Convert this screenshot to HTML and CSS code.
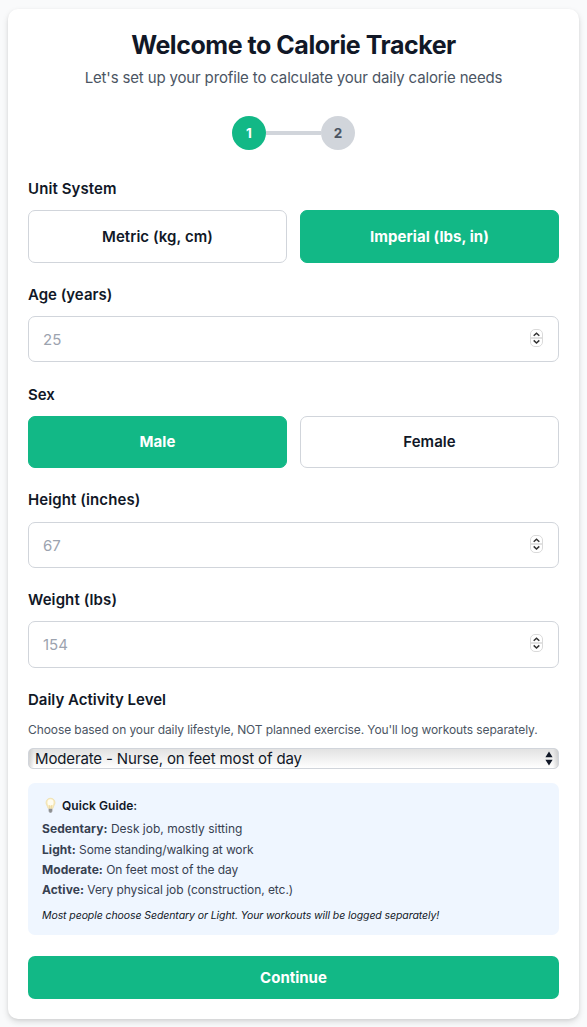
FILE: index.html
```html
<!DOCTYPE html>
<html lang="en">
<head>
<meta charset="utf-8">
<title>Calorie Tracker</title>
<link rel="stylesheet" href="styles.css">
</head>
<body>
<main class="card">
  <h1 class="title"><span>Welcome to Calorie Tracker</span></h1>
  <p class="subtitle"><span>Let's set up your profile to calculate your daily calorie needs</span></p>
  <div class="steps">
    <span class="step step-active">1</span>
    <span class="step-line"></span>
    <span class="step">2</span>
  </div>

  <section class="field field-unit">
    <div class="label">Unit System</div>
    <div class="choices">
      <button class="choice">Metric (kg, cm)</button>
      <button class="choice selected">Imperial (lbs, in)</button>
    </div>
  </section>

  <section class="field field-age">
    <div class="label">Age (years)</div>
    <div class="input"><span>25</span>
      <svg class="spinner" width="13" height="18" viewBox="0 0 13 18"><rect x=".5" y=".5" width="12" height="17" rx="4.5" fill="#fff" stroke="#dadada"/><path d="M1 9h11" stroke="#e2e2e2" stroke-width="2"/><path d="M3.7 6.8 6.5 4.2 9.3 6.8M3.7 11.4l2.8 2.6 2.8-2.6" fill="none" stroke="#333" stroke-width="1.5"/></svg>
    </div>
  </section>

  <section class="field field-sex">
    <div class="label">Sex</div>
    <div class="choices">
      <button class="choice selected">Male</button>
      <button class="choice">Female</button>
    </div>
  </section>

  <section class="field field-height">
    <div class="label">Height (inches)</div>
    <div class="input"><span>67</span>
      <svg class="spinner" width="13" height="18" viewBox="0 0 13 18"><rect x=".5" y=".5" width="12" height="17" rx="4.5" fill="#fff" stroke="#dadada"/><path d="M1 9h11" stroke="#e2e2e2" stroke-width="2"/><path d="M3.7 6.8 6.5 4.2 9.3 6.8M3.7 11.4l2.8 2.6 2.8-2.6" fill="none" stroke="#333" stroke-width="1.5"/></svg>
    </div>
  </section>

  <section class="field field-weight">
    <div class="label">Weight (lbs)</div>
    <div class="input"><span>154</span>
      <svg class="spinner" width="13" height="18" viewBox="0 0 13 18"><rect x=".5" y=".5" width="12" height="17" rx="4.5" fill="#fff" stroke="#dadada"/><path d="M1 9h11" stroke="#e2e2e2" stroke-width="2"/><path d="M3.7 6.8 6.5 4.2 9.3 6.8M3.7 11.4l2.8 2.6 2.8-2.6" fill="none" stroke="#333" stroke-width="1.5"/></svg>
    </div>
  </section>

  <section class="field field-activity">
    <div class="label">Daily Activity Level</div>
    <p class="hint">Choose based on your daily lifestyle, NOT planned exercise. You'll log workouts separately.</p>
    <div class="select"><span>Moderate - Nurse, on feet most of day</span>
      <svg width="8" height="15" viewBox="0 0 8 15"><path d="M.4 6.2 4 .5l3.6 5.7zM.4 8.8h7.2L4 14.5z" fill="#111827"/></svg>
    </div>
  </section>

  <aside class="guide">
    <div class="guide-title">
      <svg width="17" height="17" viewBox="0 0 17 17"><path d="M8.5 1.2c-2.7 0-4.5 2-4.5 4.4 0 2.2 1.5 3.3 2.2 6h4.6c.7-2.7 2.2-3.8 2.2-6 0-2.4-1.8-4.4-4.5-4.4z" fill="#f9eabb" stroke="#eddda8" stroke-width=".7"/><ellipse cx="8.5" cy="5.5" rx="3" ry="3.3" fill="#fffdf1"/><path d="M7.6 8v3.4M9.4 8v3.4" stroke="#e5cf8e" stroke-width=".6"/><path d="M6.7 11.7h3.6v2.7l-1 1.2H7.7l-1-1.2z" fill="#a5a6a8"/><path d="M6.7 13h3.6M7.5 15h2" stroke="#66686c" stroke-width=".7"/></svg>
      <span>Quick Guide:</span>
    </div>
    <p class="guide-row"><b>Sedentary:</b> Desk job, mostly sitting</p>
    <p class="guide-row guide-row-tall"><b>Light:</b> Some standing/walking at work</p>
    <p class="guide-row"><b>Moderate:</b> On feet most of the day</p>
    <p class="guide-row"><b>Active:</b> Very physical job (construction, etc.)</p>
    <p class="guide-note">Most people choose Sedentary or Light. Your workouts will be logged separately!</p>
  </aside>

  <button class="continue">Continue</button>
</main>
</body>
</html>
```
FILE: styles.css
```css
* { box-sizing: border-box; }
body {
  margin: 0;
  padding: 9px 8px 8px;
  height: 1027px;
  overflow: hidden;
  background: #f9fafb;
  color: #111827;
  font-family: Inter, "Liberation Sans", sans-serif;
  font-size: 15px;
}
p, h1 { margin: 0; }
button { font: inherit; color: inherit; padding: 0; }
.card {
  height: 1010px;
  padding: 20px 20px 0;
  background: #fff;
  border-radius: 10px;
  box-shadow: 0 3px 6px rgba(0, 0, 0, .13), 0 1px 3px rgba(0, 0, 0, .06);
}
.title {
  height: 32px;
  line-height: 32px;
  text-align: center;
  font-size: 25px;
  font-weight: 700;
  letter-spacing: -.46px;
  white-space: nowrap;
}
.subtitle {
  height: 24px;
  margin-top: 5px;
  line-height: 24px;
  text-align: center;
  letter-spacing: -.15px;
  color: #4b5563;
  white-space: nowrap;
}
.steps {
  display: flex;
  justify-content: center;
  align-items: center;
  height: 34px;
  margin-top: 26px;
}
.step {
  width: 34px;
  height: 34px;
  border-radius: 50%;
  background: #d1d5db;
  color: #4b5563;
  font-size: 13.5px;
  font-weight: 700;
  line-height: 34px;
  text-align: center;
}
.step-active { background: #12b886; color: #fff; }
.step-line { width: 55px; height: 4px; background: #d1d5db; }
.label {
  height: 20px;
  line-height: 20px;
  font-weight: 600;
  letter-spacing: .1px;
}
.field-age .label, .field-sex .label, .field-activity .label { letter-spacing: 0; }
.field-unit { margin-top: 29px; }
.field-age { margin-top: 22px; }
.field-sex { margin-top: 23px; }
.field-height, .field-weight, .field-activity { margin-top: 22px; }
.choices { display: flex; gap: 13px; margin-top: 11px; }
.choice {
  flex: 1;
  height: 53px;
  background: #fff;
  border: 1px solid #d1d5db;
  border-radius: 7px;
  font-weight: 600;
  letter-spacing: .06px;
}
.field-sex .choice { height: 52px; padding-bottom: 2px; }
.choice.selected {
  background: #12b886;
  border-color: #12b886;
  color: #fff;
  font-weight: 650;
}
.input {
  display: flex;
  justify-content: space-between;
  align-items: center;
  height: 46px;
  margin-top: 11px;
  padding: 0 15px 0 14px;
  border: 1px solid #d1d5db;
  border-radius: 7px;
  color: #9ca3af;
}
.field-height .input { margin-top: 12px; }
.field-weight .input { height: 47px; }
.spinner { margin-bottom: 3px; }
.hint {
  height: 18px;
  margin-top: 11px;
  line-height: 18px;
  font-size: 12px;
  letter-spacing: -.09px;
  color: #4b5563;
  white-space: nowrap;
}
.select {
  display: flex;
  justify-content: space-between;
  align-items: center;
  height: 21px;
  margin-top: 9px;
  padding: 0 5px 0 6px;
  border: 1px solid #d1d5db;
  border-radius: 5px;
  letter-spacing: -.14px;
  background: linear-gradient(90deg, rgba(190, 190, 190, .6), transparent 5px calc(100% - 5px), rgba(190, 190, 190, .6)), linear-gradient(#e2e2e2, #fff);
}
.guide {
  height: 152px;
  margin-top: 14px;
  padding: 13px 14px 0;
  background: #eff6ff;
  border-radius: 7px;
}
.guide-title {
  display: flex;
  align-items: center;
  gap: 3px;
  height: 19px;
  font-size: 12px;
  font-weight: 600;
  letter-spacing: .06px;
}
.guide-row {
  height: 20px;
  line-height: 20px;
  font-size: 12px;
  letter-spacing: -.06px;
  color: #374151;
}
.guide-row b { letter-spacing: .06px; }
.guide-title + .guide-row { margin-top: 4px; letter-spacing: 0; }
.guide-row-tall { height: 21px; line-height: 22px; letter-spacing: -.12px; }
.guide-note {
  height: 16px;
  margin-top: 8px;
  line-height: 16px;
  font-size: 10.5px;
  font-style: italic;
  letter-spacing: -.08px;
  white-space: nowrap;
}
.continue {
  display: block;
  width: 100%;
  height: 43px;
  margin-top: 21px;
  border: 0;
  border-radius: 7px;
  background: #12b886;
  color: #fff;
  font-weight: 650;
}
```
